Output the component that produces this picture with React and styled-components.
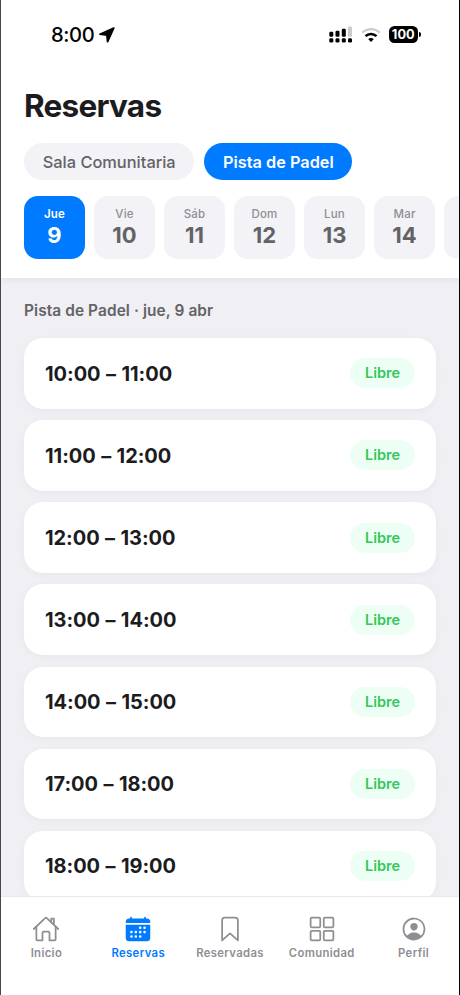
import React from "react";
import styled, { createGlobalStyle } from "styled-components";
import {
  IoHomeOutline,
  IoCalendar,
  IoBookmarkOutline,
  IoGridOutline,
  IoPersonCircleOutline,
} from "react-icons/io5";

const rooms = ["Sala Comunitaria", "Pista de Padel"];

const days = [
  { name: "Jue", number: 9 },
  { name: "Vie", number: 10 },
  { name: "Sáb", number: 11 },
  { name: "Dom", number: 12 },
  { name: "Lun", number: 13 },
  { name: "Mar", number: 14 },
];

const slots = [
  "10:00 – 11:00",
  "11:00 – 12:00",
  "12:00 – 13:00",
  "13:00 – 14:00",
  "14:00 – 15:00",
  "17:00 – 18:00",
  "18:00 – 19:00",
];

const tabs = [
  { label: "Inicio", icon: IoHomeOutline },
  { label: "Reservas", icon: IoCalendar },
  { label: "Reservadas", icon: IoBookmarkOutline },
  { label: "Comunidad", icon: IoGridOutline },
  { label: "Perfil", icon: IoPersonCircleOutline },
];

function StatusBar() {
  return (
    <StyledStatus>
      <div className="clock">
        <span>8:00</span>
        <svg width="16" height="16" viewBox="0 0 16 16">
          <path
            d="M1 7.2 14.8 1 8.6 14.6 7.9 8.1Z"
            fill="#000"
            stroke="#000"
            strokeWidth="1.8"
            strokeLinejoin="round"
          />
        </svg>
      </div>
      <div className="indicators">
        <svg width="24" height="18" viewBox="0 0 24 18">
          <rect x="0.3" y="5.7" width="4" height="5" rx="1.2" />
          <rect x="6.5" y="4.7" width="4" height="6" rx="1.2" />
          <rect x="12.8" y="2.7" width="4" height="8" rx="1.2" />
          <rect x="19" y="0.5" width="4" height="10.2" rx="1.2" fill="#cbcbcb" />
          <rect x="0.3" y="12.2" width="4" height="4.4" rx="1.4" />
          <rect x="6.5" y="12.2" width="4" height="4.4" rx="1.4" />
          <rect x="12.8" y="12.2" width="4" height="4.4" rx="1.4" />
          <rect x="19" y="12.2" width="4" height="4.4" rx="1.4" />
        </svg>
        <svg width="20" height="16" viewBox="0 0 20 16" fill="none">
          <path d="M1.3 5.6C6.2 .9 13.8 .9 18.7 5.6" stroke="#cbcbcb" strokeWidth="2.3" />
          <path d="M4.5 9.1C7.6 6.2 12.4 6.2 15.5 9.1" stroke="#000" strokeWidth="2.6" />
          <path d="M10 15 7.2 12.1C8.8 10.7 11.2 10.7 12.8 12.1Z" fill="#000" />
        </svg>
        <Battery>100</Battery>
      </div>
    </StyledStatus>
  );
}

function Slot(props) {
  return (
    <StyledSlot>
      <h2>{props.time}</h2>
      <Badge>Libre</Badge>
    </StyledSlot>
  );
}

function App() {
  return (
    <Phone>
      <GlobalStyle />
      <Header>
        <StatusBar />
        <h1>Reservas</h1>
        <Rooms>
          {rooms.map((room) => (
            <Room key={room} $active={room === "Pista de Padel"}>
              {room}
            </Room>
          ))}
        </Rooms>
        <Days>
          {days.map((day) => (
            <Day key={day.number} $active={day.number === 9}>
              <span>{day.name}</span>
              <strong>{day.number}</strong>
            </Day>
          ))}
          <Day />
        </Days>
      </Header>
      <Content>
        <p>Pista de Padel · jue, 9 abr</p>
        {slots.map((slot) => (
          <Slot key={slot} time={slot} />
        ))}
      </Content>
      <TabBar>
        {tabs.map(({ label, icon: Icon }) => (
          <Tab key={label} $active={label === "Reservas"}>
            <Icon size={28} />
            <span>{label}</span>
          </Tab>
        ))}
      </TabBar>
    </Phone>
  );
}

const GlobalStyle = createGlobalStyle`
  * {
    box-sizing: border-box;
  }

  body {
    margin: 0;
    font-family: Inter, "Liberation Sans", sans-serif;
  }

  h1, h2, p {
    margin: 0;
  }

  button {
    border: 0;
    padding: 0;
    font-family: inherit;
    cursor: pointer;
  }
`;

const Phone = styled.div`
  display: flex;
  flex-direction: column;
  width: 460px;
  height: 995px;
  overflow: hidden;
  background: #f0eff4;
  border-left: 1px solid #48484a;
  border-right: 1px solid #000000;
`;

const Header = styled.header`
  flex: none;
  height: 278px;
  background: #ffffff;
  box-shadow: 0 1px 8px rgba(0, 0, 0, 0.07);
  z-index: 1;

  h1 {
    margin: 16px 0 0 23px;
    height: 41px;
    line-height: 41px;
    font-size: 31.5px;
    font-weight: 700;
    letter-spacing: -0.75px;
    color: #1c1c1e;
  }
`;

const StyledStatus = styled.div`
  display: flex;
  justify-content: space-between;
  align-items: center;
  height: 69px;
  padding: 0 37px 0 50px;
  color: #000000;

  .clock {
    display: flex;
    align-items: center;
    gap: 4.5px;
    font-size: 20.2px;
    font-weight: 500;
    letter-spacing: -0.4px;
  }

  .indicators {
    display: flex;
    align-items: center;
    gap: 8px;
  }
`;

const Battery = styled.div`
  position: relative;
  width: 29.5px;
  height: 16.5px;
  margin-right: 4px;
  border-radius: 5.5px;
  background: #000000;
  color: #ffffff;
  font-size: 12.8px;
  font-weight: 700;
  line-height: 17px;
  text-align: center;

  &::after {
    content: "";
    position: absolute;
    top: 6px;
    right: -3px;
    width: 2px;
    height: 5px;
    border-radius: 0 2px 2px 0;
    background: #000000;
  }
`;

const Rooms = styled.div`
  display: flex;
  gap: 10px;
  margin: 17px 0 0 23px;
`;

const Room = styled.button`
  height: 37px;
  padding: 0 18.7px;
  border-radius: 19px;
  font-size: ${(props) => (props.$active ? "16.3px" : "16.4px")};
  font-weight: ${(props) => (props.$active ? 600 : 500)};
  white-space: nowrap;
  color: ${(props) => (props.$active ? "#ffffff" : "#636366")};
  background: ${(props) => (props.$active ? "#007aff" : "#f2f2f7")};
`;

const Days = styled.div`
  display: flex;
  gap: 9px;
  margin: 16px 0 0 23px;
  overflow: hidden;
`;

const Day = styled.button`
  display: flex;
  flex: none;
  flex-direction: column;
  align-items: center;
  width: 61px;
  height: 63px;
  padding-top: 10px;
  border-radius: 14px;
  color: ${(props) => (props.$active ? "#ffffff" : "#636366")};
  background: ${(props) => (props.$active ? "#007aff" : "#f2f2f7")};

  span {
    height: 15px;
    line-height: 16px;
    font-size: 11.5px;
    font-weight: ${(props) => (props.$active ? 600 : 500)};
    letter-spacing: 0.2px;
    color: ${(props) => (props.$active ? "#ffffff" : "#8e8e93")};
  }

  strong {
    height: 28px;
    line-height: 29px;
    font-size: 22px;
    font-weight: 700;
  }
`;

const Content = styled.main`
  display: flex;
  flex: 1;
  flex-direction: column;
  gap: 11.7px;
  min-height: 0;
  padding: 22px 23.4px 0 23px;
  overflow: hidden;

  p {
    flex: none;
    height: 26.5px;
    line-height: 22px;
    font-size: 15.4px;
    font-weight: 600;
    letter-spacing: 0.1px;
    color: #636366;
  }
`;

const StyledSlot = styled.div`
  display: flex;
  flex: none;
  justify-content: space-between;
  align-items: center;
  height: 70.4px;
  padding: 0 21px;
  border-radius: 19px;
  background: #ffffff;
  box-shadow: 0 2px 8px rgba(0, 0, 0, 0.04);

  h2 {
    padding-top: 1px;
    font-size: 20px;
    font-weight: 650;
    letter-spacing: -0.05px;
    word-spacing: 0.8px;
    color: #1c1c1e;
  }
`;

const Badge = styled.span`
  height: 30px;
  padding: 0 14.6px;
  border-radius: 15px;
  font-size: 14.5px;
  font-weight: 600;
  line-height: 30px;
  color: #34c759;
  background: #edfff5;
`;

const TabBar = styled.nav`
  display: flex;
  flex: none;
  height: 99px;
  padding-top: 18px;
  background: #ffffff;
  border-top: 1px solid #e9e9ed;
`;

const Tab = styled.div`
  display: flex;
  flex: 1 1 0;
  flex-direction: column;
  align-items: center;
  gap: 1px;
  color: ${(props) => (props.$active ? "#007aff" : "#8e8e93")};

  &:not(:last-child) {
    padding-right: 1px;
  }

  span {
    height: 18px;
    line-height: 18px;
    font-size: 11.3px;
    font-weight: 600;
    letter-spacing: 0.35px;
  }
`;

export default App;
